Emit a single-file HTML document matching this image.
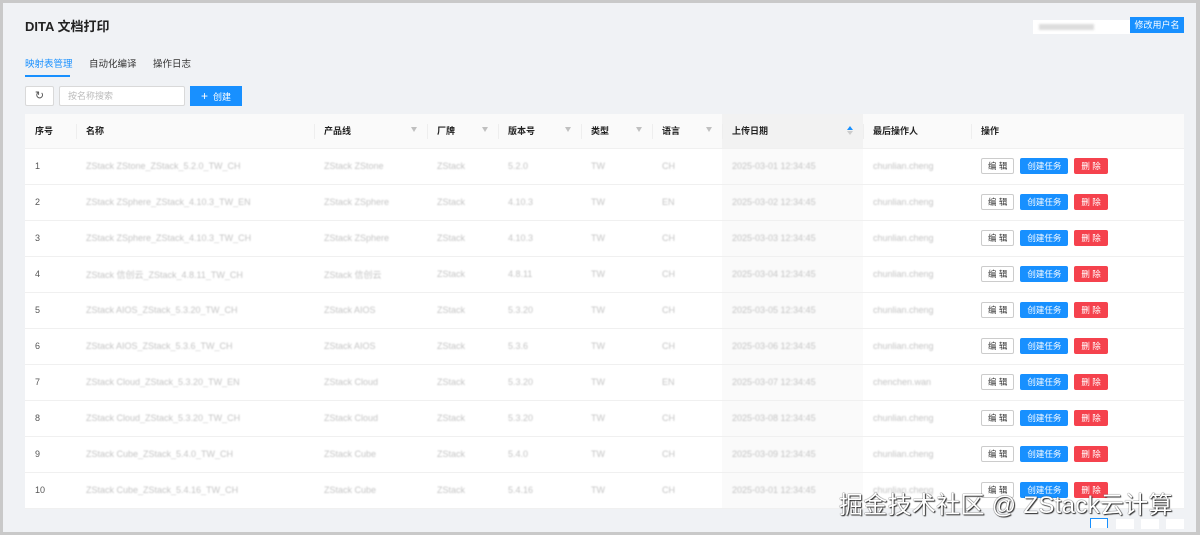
<!DOCTYPE html>
<html><head><meta charset="utf-8"><style>
*{margin:0;padding:0;box-sizing:border-box}
body{width:1200px;height:535px;overflow:hidden;background:#c9c9c9;font-family:"Liberation Sans","Noto Sans CJK SC",sans-serif;font-size:9px;color:#333;position:relative}
.page{position:absolute;left:3px;top:3px;width:1193px;height:529px;background:#f0f2f5}
.abs{position:absolute}
.title{left:22px;top:13px;font-size:13px;font-weight:bold;color:#222}
.tab{top:53px;font-size:9.5px;color:#333}
.btnw{background:#fff;border:1px solid #d9d9d9;border-radius:2px}
table{position:absolute;left:22px;top:111px;width:1159px;border-collapse:collapse;background:#fff;table-layout:fixed}
th{height:34px;background:#fafafa;text-align:left;font-weight:bold;font-size:9px;color:#222;padding-left:10px;position:relative;border-bottom:1px solid #f0f0f0}
td{height:36px;padding-left:10px;border-bottom:1px solid #f0f0f0;color:#bbb;white-space:nowrap;overflow:hidden}
td.b span{filter:blur(0.9px);color:#c4c4c4}
th.d{background:#f2f2f2}td.d{background:#fafafa}
td.n{color:#555}
.f{position:absolute;right:10px;top:13px;width:0;height:0;border-left:3px solid transparent;border-right:3px solid transparent;border-top:5px solid #c0c0c0}
.sep{position:absolute;left:0;top:10px;height:15px;border-left:1px solid #eee}
.ob{display:inline-block;height:16px;line-height:14px;font-size:8.5px;padding:0 6px;border-radius:2px;margin-right:6px;vertical-align:middle}
.e{border:1px solid #ccc;color:#333;background:#fff}
.c{background:#1890ff;color:#fff;border:1px solid #1890ff}
.x{background:#f5424d;color:#fff;border:1px solid #f5424d}
.wm{left:836px;top:482px;font-size:24px;color:#fff;text-shadow:0 0 1px #000,1px 1px 1px #333;letter-spacing:0.3px;white-space:nowrap}
</style></head><body><div class="page">
<div class="abs title">DITA 文档打印</div>
<div class="abs" style="left:1030px;top:17px;width:97px;height:14px;background:#fff"><div style="margin:4px 6px;width:55px;height:6px;background:#ddd;filter:blur(1px)"></div></div>
<div class="abs" style="left:1127px;top:14px;width:54px;height:16px;background:#1890ff;color:#fff;font-size:9px;text-align:center;line-height:16px">修改用户名</div>
<div class="abs tab" style="left:22px;color:#1890ff">映射表管理</div>
<div class="abs" style="left:22px;top:72px;width:45px;height:2px;background:#1890ff"></div>
<div class="abs tab" style="left:86px">自动化编译</div>
<div class="abs tab" style="left:150px">操作日志</div>
<div class="abs btnw" style="left:22px;top:83px;width:29px;height:20px;text-align:center;line-height:18px;font-size:11px;color:#555">↻</div>
<div class="abs btnw" style="left:56px;top:83px;width:126px;height:20px;color:#bbb;padding-left:8px;line-height:18px">按名称搜索</div>
<div class="abs" style="left:187px;top:83px;width:52px;height:20px;background:#1890ff;color:#fff;line-height:20px;text-align:center;font-size:9px"><b style="font-size:12px;font-weight:normal">+</b>&nbsp; 创建</div>
<table>
<colgroup><col style="width:51px"><col style="width:238px"><col style="width:113px"><col style="width:71px"><col style="width:83px"><col style="width:71px"><col style="width:70px"><col style="width:141px"><col style="width:108px"><col></colgroup>
<tr><th>序号</th><th><i class="sep"></i>名称</th><th><i class="sep"></i>产品线<i class="f"></i></th><th><i class="sep"></i>厂牌<i class="f"></i></th><th><i class="sep"></i>版本号<i class="f"></i></th><th><i class="sep"></i>类型<i class="f"></i></th><th><i class="sep"></i>语言<i class="f"></i></th><th class="d"><i class="sep"></i>上传日期<i style="position:absolute;right:10px;top:12px;width:0;height:0;border-left:3px solid transparent;border-right:3px solid transparent;border-bottom:4px solid #1890ff"></i><i style="position:absolute;right:10px;top:17px;width:0;height:0;border-left:3px solid transparent;border-right:3px solid transparent;border-top:4px solid #ccc"></i></th><th><i class="sep"></i>最后操作人</th><th><i class="sep"></i>操作</th></tr>
<tbody id="tb"></tbody>
</table>
<div class="abs" style="left:1087px;top:515px;width:18px;height:10px;border:1px solid #1890ff;border-bottom:none;background:#fff"></div>
<div class="abs" style="left:1113px;top:516px;width:18px;height:10px;background:#fff"></div>
<div class="abs" style="left:1138px;top:516px;width:18px;height:10px;background:#fff"></div>
<div class="abs" style="left:1163px;top:516px;width:18px;height:10px;background:#fff"></div>
<div class="abs wm">掘金技术社区 @ ZStack云计算</div>
</div>
<script>
var names=["ZStack ZStone_ZStack_5.2.0_TW_CH","ZStack ZSphere_ZStack_4.10.3_TW_EN","ZStack ZSphere_ZStack_4.10.3_TW_CH","ZStack 信创云_ZStack_4.8.11_TW_CH","ZStack AIOS_ZStack_5.3.20_TW_CH","ZStack AIOS_ZStack_5.3.6_TW_CH","ZStack Cloud_ZStack_5.3.20_TW_EN","ZStack Cloud_ZStack_5.3.20_TW_CH","ZStack Cube_ZStack_5.4.0_TW_CH","ZStack Cube_ZStack_5.4.16_TW_CH"];
var pl=["ZStack ZStone","ZStack ZSphere","ZStack ZSphere","ZStack 信创云","ZStack AIOS","ZStack AIOS","ZStack Cloud","ZStack Cloud","ZStack Cube","ZStack Cube"];
var v=["5.2.0","4.10.3","4.10.3","4.8.11","5.3.20","5.3.6","5.3.20","5.3.20","5.4.0","5.4.16"];
var lg=["CH","EN","CH","CH","CH","CH","EN","CH","CH","CH"];
var h="";for(var i=0;i<10;i++){h+='<tr><td class="n">'+(i+1)+'</td><td class="b"><span>'+names[i]+'</span></td><td class="b"><span>'+pl[i]+'</span></td><td class="b"><span>ZStack</span></td><td class="b"><span>'+v[i]+'</span></td><td class="b"><span>TW</span></td><td class="b"><span>'+lg[i]+'</span></td><td class="b d"><span>2025-03-0'+(i%9+1)+' 12:34:45</span></td><td class="b"><span>'+(i==6?'chenchen.wan':'chunlian.cheng')+'</span></td><td><span class="ob e">编 辑</span><span class="ob c">创建任务</span><span class="ob x">删 除</span></td></tr>'}
document.getElementById("tb").innerHTML=h;
</script>
</body></html>
